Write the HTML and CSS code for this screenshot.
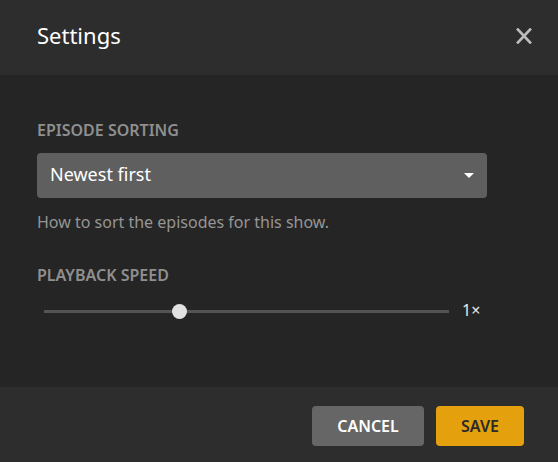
FILE: index.html
```html
<!DOCTYPE html>
<html>
<head>
<meta charset="utf-8">
<link rel="stylesheet" href="styles.css">
</head>
<body>
<div class="modal">
  <header class="modal-header">
    <h1 class="title">Settings</h1>
    <button class="close" aria-label="Close">
      <svg width="18" height="16" viewBox="0 0 18 16"><path d="M2 0.5 L16 15.5 M16 0.5 L2 15.5" stroke="#bcbcbc" stroke-width="2.6" fill="none"/></svg>
    </button>
  </header>
  <main class="modal-body">
    <div class="field">
      <div class="label">EPISODE SORTING</div>
      <div class="select">
        <span class="select-text">Newest first</span>
        <span class="caret"></span>
      </div>
      <div class="help">How to sort the episodes for this show.</div>
    </div>
    <div class="field speed">
      <div class="label">PLAYBACK SPEED</div>
      <div class="slider-row">
        <div class="track"><span class="thumb"></span></div>
        <span class="value">1×</span>
      </div>
    </div>
  </main>
  <footer class="modal-footer">
    <button class="btn cancel">CANCEL</button>
    <button class="btn save">SAVE</button>
  </footer>
</div>
</body>
</html>
```

FILE: styles.css
```css
* { box-sizing: border-box; }
html, body { margin: 0; padding: 0; }
body {
  width: 558px;
  height: 462px;
  background: #252525;
  font-family: "Noto Sans", "Open Sans", sans-serif;
  overflow: hidden;
}
.modal { display: flex; flex-direction: column; height: 462px; }
.modal-header {
  height: 75px;
  flex: none;
  background: #2d2d2d;
  display: flex;
  align-items: center;
  justify-content: space-between;
  padding: 0 25px 0 37px;
}
.title {
  margin: -6px 0 0 0;
  font-size: 22px;
  font-weight: 400;
  color: #fff;
  line-height: 22px;
}
.close {
  background: none;
  border: 0;
  padding: 0;
  width: 18px;
  height: 16px;
  display: flex;
  margin-top: -3px;
}
.modal-body {
  flex: 1;
  background: #252525;
  padding: 45px 71px 0 37px;
}
.label {
  font-size: 16px;
  font-weight: 600;
  color: #8f8f8f;
  line-height: 20px;
}
.select {
  margin-top: 13px;
  height: 45px;
  background: #5f5f5f;
  border-radius: 4px;
  display: flex;
  align-items: center;
  justify-content: space-between;
  padding: 0 13px 0 13px;
}
.select-text {
  color: #fff;
  font-size: 18px;
  line-height: 20px;
  margin-top: -3px;
}
.caret {
  width: 0;
  height: 0;
  border-left: 5px solid transparent;
  border-right: 5px solid transparent;
  border-top: 5px solid #fff;
}
.help {
  margin-top: 13px;
  font-size: 16px;
  color: #959595;
  line-height: 22px;
}
.speed { margin-top: 32px; }
.slider-row {
  display: flex;
  align-items: center;
  height: 16px;
  margin-top: 18px;
  padding-left: 7px;
}
.track {
  position: relative;
  width: 405px;
  height: 3px;
  background: #545454;
}
.thumb {
  position: absolute;
  left: 128px;
  top: 50%;
  width: 15px;
  height: 15px;
  margin-top: -7.5px;
  border-radius: 50%;
  background: #e1e1e1;
}
.value {
  margin-left: 13px;
  color: #e8e8e8;
  font-size: 16px;
  line-height: 16px;
  margin-top: -2px;
}
.modal-footer {
  height: 75px;
  flex: none;
  background: #2d2d2d;
  display: flex;
  justify-content: flex-end;
  align-items: center;
  gap: 12px;
  padding: 3px 34px 0 0;
}
.btn {
  height: 40px;
  border: 0;
  border-radius: 4px;
  font-family: "Noto Sans", "Open Sans", sans-serif;
  font-size: 16px;
  font-weight: 600;
  padding: 0;
  line-height: 40px;
}
.cancel { width: 112px; background: #666; color: #fff; }
.save { width: 88px; background: #e5a00d; color: #2a2a2a; }
```
